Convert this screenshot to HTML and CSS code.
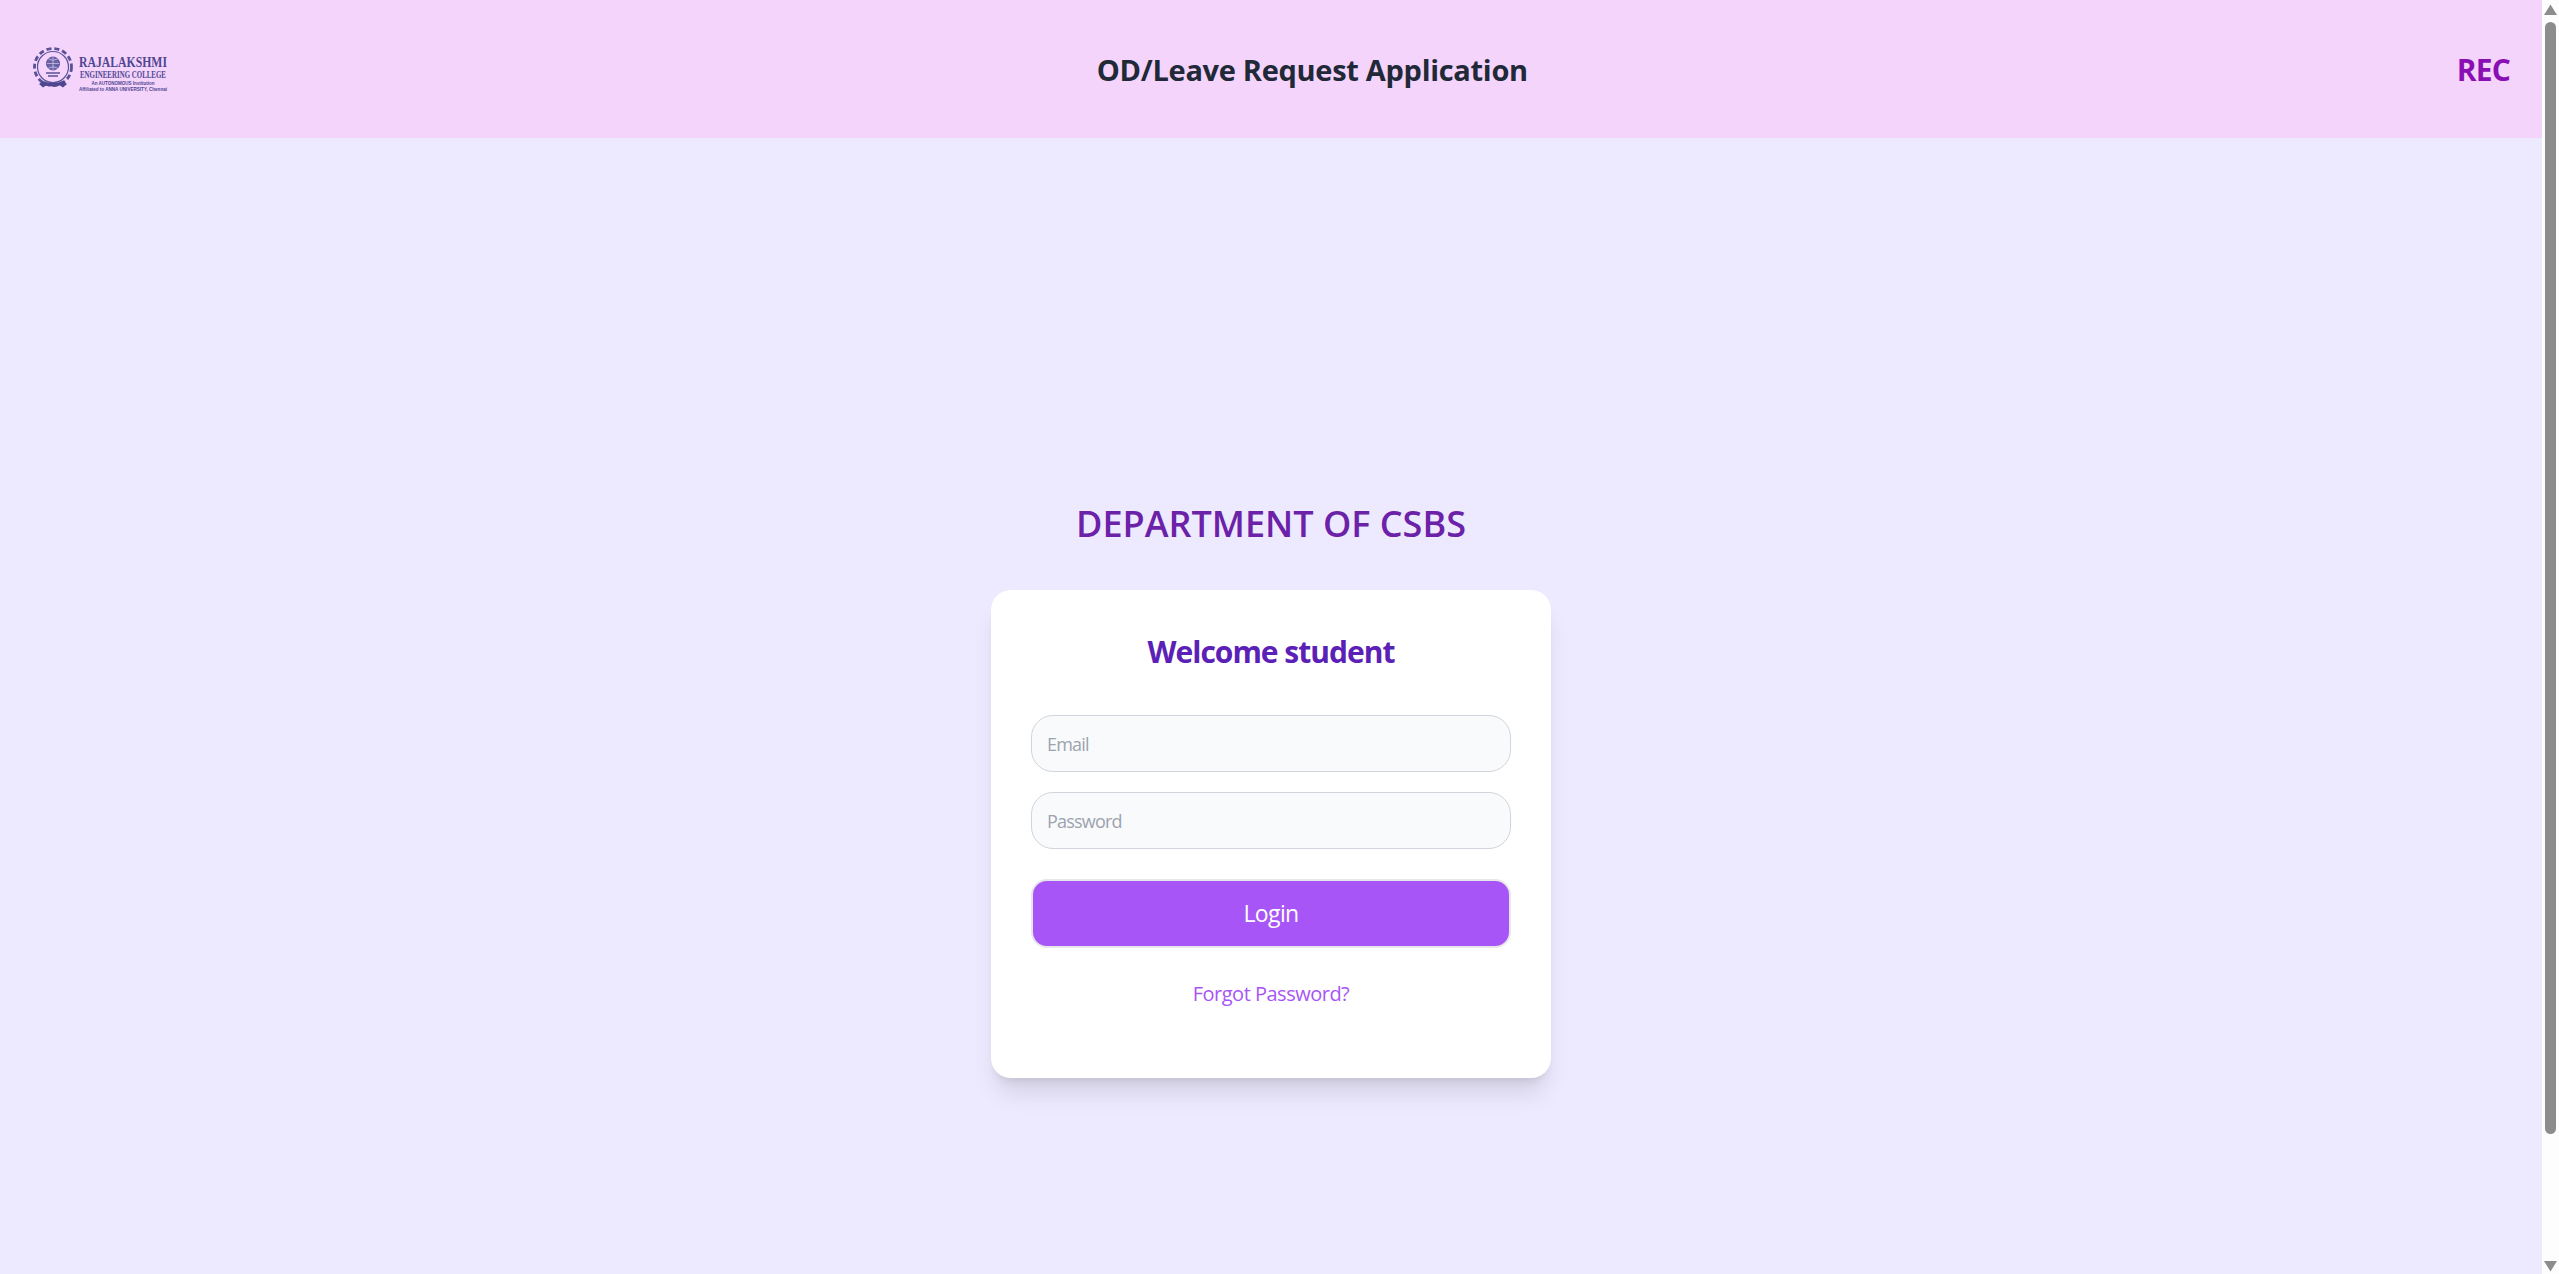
FILE: index.html
```html
<!DOCTYPE html>
<html lang="en">
<head>
<meta charset="utf-8">
<title>OD/Leave Request Application</title>
<link rel="stylesheet" href="styles.css">
</head>
<body>
<div class="window">
  <div class="page">
    <header class="topbar">
      <svg class="logo" viewBox="0 0 136 44" width="136" height="44" role="img" aria-label="Rajalakshmi Engineering College logo">
        <g fill="none" stroke="#5a5296">
          <circle cx="21" cy="20" r="18.500" stroke-width="2.800" stroke-dasharray="5 3"/>
          <circle cx="21" cy="20" r="15.500" stroke-width="1.200"/>
          <circle cx="21" cy="16.500" r="6.500" fill="#6a62a6" stroke-width="1"/>
          <path d="M15 16.500h12M21 10v13M16.500 12q4.500 2.500 9 0M16.500 21q4.500-2.500 9 0" stroke="#d9c8ee" stroke-width=".7"/>
          <path d="M14 26h14M16 29h10" stroke-width="1.400"/>
        </g>
        <path d="M7 37l4-3q10 4 20 0l4 3-4 3.500-3-2q-7 2-14 0l-3 2z" fill="#4f4690"/>
        <g class="logo-text" fill="#4f4690" text-anchor="middle">
          <text class="logo-l1" x="91" y="20" textLength="88" lengthAdjust="spacingAndGlyphs">RAJALAKSHMI</text>
          <text class="logo-l2" x="91" y="31" textLength="86" lengthAdjust="spacingAndGlyphs">ENGINEERING COLLEGE</text>
          <text class="logo-l3" x="91" y="37.500" textLength="63" lengthAdjust="spacingAndGlyphs">An AUTONOMOUS Institution</text>
          <text class="logo-l3" x="91" y="44" textLength="88" lengthAdjust="spacingAndGlyphs">Affiliated to ANNA UNIVERSITY, Chennai</text>
        </g>
      </svg>
      <h1 class="app-title">OD/Leave Request Application</h1>
      <span class="brand">REC</span>
    </header>
    <main class="content">
      <h2 class="department">DEPARTMENT OF CSBS</h2>
      <form class="card">
        <h3 class="welcome">Welcome student</h3>
        <input class="field" type="email" placeholder="Email">
        <input class="field field-second" type="password" placeholder="Password">
        <button class="login" type="button">Login</button>
        <a class="forgot" href="#">Forgot Password?</a>
      </form>
    </main>
  </div>
  <div class="scrollbar" aria-hidden="true">
    <svg class="arrow" viewBox="0 0 17 16" width="17" height="16"><path d="M8.500 4.500L15 15H2z" fill="#8c8c8c"/></svg>
    <div class="track"><div class="thumb"></div></div>
    <svg class="arrow" viewBox="0 0 17 16" width="17" height="16"><path d="M2 3h13L8.500 13.500z" fill="#8c8c8c"/></svg>
  </div>
</div>
</body>
</html>
```
FILE: styles.css
```css
* { box-sizing: border-box; }
html, body { margin: 0; height: 100%; overflow: hidden; }
body { font-family: "Open Sans", "Noto Sans", sans-serif; background: #ede9fe; }
.window { display: flex; height: 1274px; }
.page { flex: 1; min-width: 0; display: flex; flex-direction: column; background: #ede9fe; }

.topbar {
  height: 138px;
  padding: 0 32px;
  display: flex;
  align-items: center;
  justify-content: space-between;
  background: #f5d4fc;
}
.logo { flex: none; display: block; overflow: visible; }
.logo-text { font-family: "Liberation Serif", serif; }
.logo-l1 { font-size: 14px; font-weight: 700; }
.logo-l2 { font-size: 9.500px; font-weight: 700; }
.logo-l3 { font-size: 5px; font-family: "Liberation Sans", sans-serif; font-weight: 700; }
.app-title { margin: 2px 0 0; font-size: 29px; font-weight: 700; color: #1f2937; line-height: 1.3; letter-spacing: -0.3px; }
.brand { font-size: 30px; font-weight: 700; color: #8a0fb3; letter-spacing: -.8px; }

.content { display: flex; flex-direction: column; align-items: center; padding-top: 360px; }
.department { margin: 0 0 40px; font-size: 36px; font-weight: 600; line-height: 52px; color: #6b21a8; }
.card {
  width: 560px;
  height: 488px;
  padding: 40px;
  display: flex;
  flex-direction: column;
  background: #fff;
  border-radius: 20px;
  box-shadow: 0 20px 25px -5px rgba(0, 0, 0, .1), 0 8px 10px -6px rgba(0, 0, 0, .1);
}
.welcome { margin: 0 0 41px; text-align: center; font-size: 30px; line-height: 44px; font-weight: 700; color: #5b21b6; letter-spacing: -1px; }
.field {
  width: 100%;
  height: 57px;
  padding: 0 15px;
  font: 400 18px "Open Sans", sans-serif;
  letter-spacing: -.8px;
  background: #f9fafb;
  border: 1.500px solid #d1d5db;
  border-radius: 22px;
  outline: none;
}
.field::placeholder { color: #9ca3af; opacity: 1; }
.field-second { margin-top: 20px; }
.login {
  margin-top: 30px;
  height: 69px;
  font: 400 23px "Open Sans", sans-serif;
  letter-spacing: -.6px;
  padding-bottom: 3px;
  color: #fff;
  background: #a855f7;
  border: 2px solid #e5e7eb;
  border-radius: 16px;
}
.forgot { margin-top: 32px; text-align: center; font-size: 20px; line-height: 28px; color: #a855f7; text-decoration: none; letter-spacing: -.5px; }

.scrollbar { flex: none; width: 17px; display: flex; flex-direction: column; background: #fdfdfd; }
.arrow { flex: none; display: block; }
.track { flex: 1; padding: 6px 3px 124px; display: flex; }
.thumb { flex: 1; background: #8c8c8c; border-radius: 6px; }
```
